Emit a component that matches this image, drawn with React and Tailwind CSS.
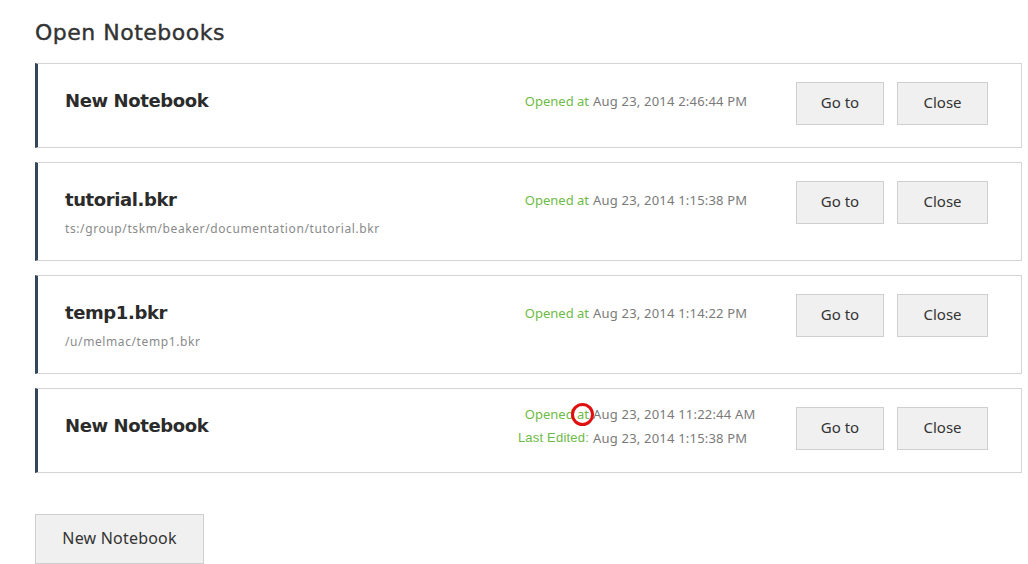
import React from "react";

const notebooks = [
  { title: "New Notebook", opened: "Aug 23, 2014 2:46:44 PM" },
  {
    title: "tutorial.bkr",
    path: "ts:/group/tskm/beaker/documentation/tutorial.bkr",
    opened: "Aug 23, 2014 1:15:38 PM",
  },
  { title: "temp1.bkr", path: "/u/melmac/temp1.bkr", opened: "Aug 23, 2014 1:14:22 PM" },
  {
    title: "New Notebook",
    opened: "Aug 23, 2014 11:22:44 AM",
    edited: "Aug 23, 2014 1:15:38 PM",
    marked: true,
  },
];

function Card({ nb }) {
  return (
    <div className="flex border border-[#d4d4d4] border-l-[3px] border-l-[#34465a] bg-white pl-[27px] pr-[33px] pt-[18px] pb-[22px]">
      <div className="flex-1">
        <div className="text-[18px] font-bold leading-[38px] text-[#2b2b2b] font-['DejaVu_Sans',sans-serif] tracking-[-0.4px]">
          {nb.title}
        </div>
        {nb.path && (
          <div className="text-[12px] leading-[19px] tracking-[0.6px] text-[#8a8a8a] font-['Noto_Sans',sans-serif]">
            {nb.path}
          </div>
        )}
      </div>
      <div className="flex h-[43px] items-center">
        <div className="relative -top-[3px] grid w-[273px] grid-cols-[80px_1fr] gap-x-[4px] text-[13px] leading-[24px] font-['Noto_Sans',sans-serif]">
          <span className="text-right text-[#6dbb45]">Opened at</span>
          <span className="text-[#7a7a7a] tracking-[0.2px]">{nb.opened}</span>
          {nb.edited && (
            <>
              <span className="-ml-[4px] whitespace-nowrap text-right text-[13px] tracking-[0.2px] text-[#6dbb45] font-['Liberation_Sans',sans-serif]">Last Edited:</span>
              <span className="text-[#7a7a7a] tracking-[0.2px]">{nb.edited}</span>
            </>
          )}
          {nb.marked && (
            <div className="absolute left-[62px] top-[1px] h-[23px] w-[23px] rounded-full border-[3px] border-[#e01010]" />
          )}
        </div>
        <button className="ml-[14px] h-[43px] w-[88px] border border-[#cfcfcf] bg-[#f0f0f0] pb-[3px] text-[15px] text-[#333] font-['Noto_Sans',sans-serif]">
          Go to
        </button>
        <button className="ml-[13px] h-[43px] w-[91px] border border-[#cfcfcf] bg-[#f0f0f0] pb-[3px] text-[15px] text-[#333] font-['Noto_Sans',sans-serif]">
          Close
        </button>
      </div>
    </div>
  );
}

export default function App() {
  return (
    <div className="min-h-screen bg-white pl-[35px] pr-[6px] pt-[18px]">
      <h2 className="text-[22px] leading-[30px] tracking-[0.5px] text-[#333] font-['DejaVu_Sans',sans-serif] [-webkit-text-stroke:0.4px_#333]">
        Open Notebooks
      </h2>
      <div className="mt-[15px] flex flex-col gap-[14px]">
        {notebooks.map((nb, i) => (
          <Card key={i} nb={nb} />
        ))}
      </div>
      <button className="mt-[41px] h-[50px] w-[169px] border border-[#cfcfcf] bg-[#f0f0f0] pb-[2px] text-[16px] tracking-[0.2px] text-[#333] font-['Noto_Sans',sans-serif]">
        New Notebook
      </button>
    </div>
  );
}
